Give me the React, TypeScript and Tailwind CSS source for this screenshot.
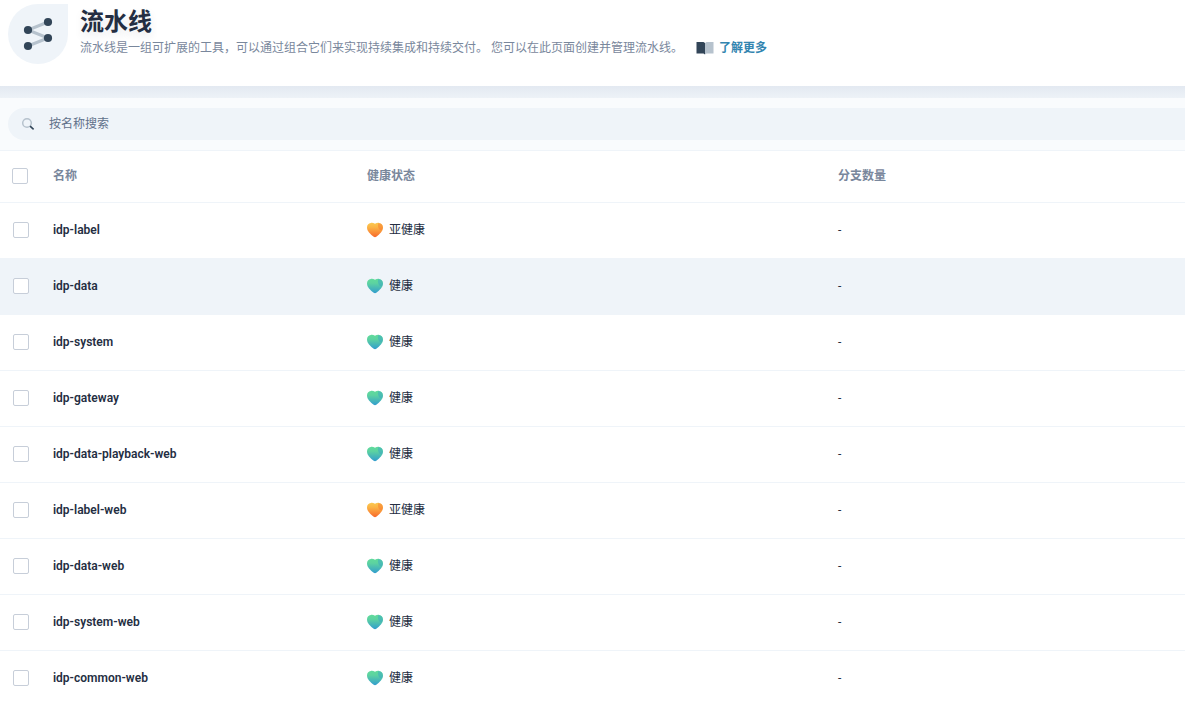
import React from 'react'

type Pipeline = {
  name: string
  healthy: boolean
  active?: boolean
}

const pipelines: Pipeline[] = [
  { name: 'idp-label', healthy: false },
  { name: 'idp-data', healthy: true, active: true },
  { name: 'idp-system', healthy: true },
  { name: 'idp-gateway', healthy: true },
  { name: 'idp-data-playback-web', healthy: true },
  { name: 'idp-label-web', healthy: false },
  { name: 'idp-data-web', healthy: true },
  { name: 'idp-system-web', healthy: true },
  { name: 'idp-common-web', healthy: true },
]

const PipelineIcon: React.FC = () => (
  <svg width="40" height="40" viewBox="0 0 40 40" aria-hidden="true">
    <path d="M30 8L10 16L30 24L10 32" fill="none" stroke="#b6c2cd" strokeWidth="3" />
    <g fill="#324558">
      <circle cx="30" cy="8" r="4.1" />
      <circle cx="10" cy="16" r="4.1" />
      <circle cx="30" cy="24" r="4.1" />
      <circle cx="10" cy="32" r="4.1" />
    </g>
  </svg>
)

const BookIcon: React.FC = () => (
  <svg width="20" height="20" viewBox="0 0 20 20" aria-hidden="true">
    <path d="M1.5 4H8.5L10 5V16.5L8.5 15.5H1.5Z" fill="#324558" />
    <path d="M18.5 4H11.5L10 5V16.5L11.5 15.5H18.5Z" fill="#b6c2cd" />
  </svg>
)

const SearchIcon: React.FC = () => (
  <svg width="16" height="16" viewBox="0 0 16 16" aria-hidden="true" className="shrink-0">
    <circle cx="7" cy="7" r="4.3" fill="none" stroke="#b6c2cd" strokeWidth="1.5" />
    <path d="M10.1 10.1L13.6 13.4" stroke="#324558" strokeWidth="1.6" />
  </svg>
)

const HeartIcon: React.FC<{ healthy: boolean }> = ({ healthy }) => {
  const id = healthy ? 'heart-green' : 'heart-orange'
  return (
    <svg width="16" height="16" viewBox="0 0 16 16" aria-hidden="true">
      <defs>
        <linearGradient id={id} x1="0" y1="0" x2="0" y2="1">
          <stop offset="0" stopColor={healthy ? '#60da9c' : '#fbc850'} />
          <stop offset="0.3" stopColor={healthy ? '#5dd3a0' : '#fbb545'} />
          <stop offset="1" stopColor={healthy ? '#329dce' : '#f8692b'} />
        </linearGradient>
      </defs>
      <path
        d="M8 1.7C6.7.9 5.2.7 3.8.9C1.4 1.2 0 3 0 5.4C0 9.2 3.2 11.8 6.7 14.7C7.5 15.3 8.5 15.3 9.3 14.7C12.8 11.8 16 9.2 16 5.4C16 3 14.6 1.2 12.2.9C10.8.7 9.3.9 8 1.7Z"
        fill={`url(#${id})`}
      />
      <path
        d="M11.4.9C10.5 3 10.9 5.9 12.6 7.4C13.6 8.2 14.8 8.1 15.4 7.6C16.7 4.3 15.2 1 11.4.9Z"
        fill={healthy ? '#329dce' : '#f8692b'}
        opacity="0.4"
      />
    </svg>
  )
}

const Checkbox: React.FC<{ label: string }> = ({ label }) => (
  <input
    type="checkbox"
    aria-label={label}
    className="block size-4 appearance-none rounded-xs border border-[#c7ced9] bg-white checked:bg-[#324558]"
  />
)

const Header: React.FC = () => (
  <header className="flex h-[86px] gap-3 px-2 pt-1">
    <div className="flex size-15 shrink-0 items-center justify-center rounded-full rounded-tr-none bg-[#eff4f9]">
      <PipelineIcon />
    </div>
    <div className="pt-0.5">
      <h1 className="text-2xl leading-8 font-bold text-[#242e42] text-shadow-[0_4px_8px_rgba(36,46,66,0.1)]">流水线</h1>
      <div className="flex items-center text-xs leading-5 text-[#79879c]">
        <p>流水线是一组可扩展的工具，可以通过组合它们来实现持续集成和持续交付。 您可以在此页面创建并管理流水线。</p>
        <a href="#" className="ml-3 flex items-center gap-1 font-bold text-[#3385b0]">
          <BookIcon />
          了解更多
        </a>
      </div>
    </div>
  </header>
)

const SearchBar: React.FC = () => (
  <div className="border-b border-[#eff4f9] bg-[#f9fbfd] py-2.5 pl-2">
    <label className="flex h-8 items-center gap-[13px] rounded-l-full bg-[#eff4f9] pl-3">
      <SearchIcon />
      <input
        type="text"
        aria-label="按名称搜索"
        placeholder="按名称搜索"
        className="w-full bg-transparent text-xs leading-5 text-[#242e42] outline-none placeholder:text-[#5f708a]"
      />
    </label>
  </div>
)

const PipelineTable: React.FC = () => (
  <table className="w-full table-fixed border-separate border-spacing-0 text-left text-xs leading-5 text-[#242e42]">
    <colgroup>
      <col className="w-[53px]" />
      <col className="w-[314px]" />
      <col className="w-[471px]" />
      <col />
    </colgroup>
    <thead>
      <tr className="h-13 text-[#79879c] *:border-b *:border-[#eff4f9] *:pb-0.5">
        <th className="pl-3"><Checkbox label="全选" /></th>
        <th className="font-bold">名称</th>
        <th className="font-bold">健康状态</th>
        <th className="font-bold">分支数量</th>
      </tr>
    </thead>
    <tbody>
      {pipelines.map(({ name, healthy, active }) => (
        <tr key={name} className={`h-14 *:border-b *:border-[#eff4f9] *:pb-0.5 hover:bg-[#eff4f9] ${active ? 'bg-[#eff4f9]' : ''}`}>
          <td className="pl-[13px]"><Checkbox label={name} /></td>
          <td className="font-semibold">{name}</td>
          <td>
            <div className="flex items-center gap-1.5">
              <HeartIcon healthy={healthy} />
              {healthy ? '健康' : '亚健康'}
            </div>
          </td>
          <td>-</td>
        </tr>
      ))}
    </tbody>
  </table>
)

const App: React.FC = () => {
  return (
    <div className="h-screen overflow-hidden bg-white pr-px font-[Roboto,'Noto_Sans_CJK_SC',sans-serif]">
      <Header />
      <div className="h-3 bg-linear-to-b from-[#e3e9f1] to-[#edf2f7]" />
      <SearchBar />
      <PipelineTable />
    </div>
  )
}

export default App
